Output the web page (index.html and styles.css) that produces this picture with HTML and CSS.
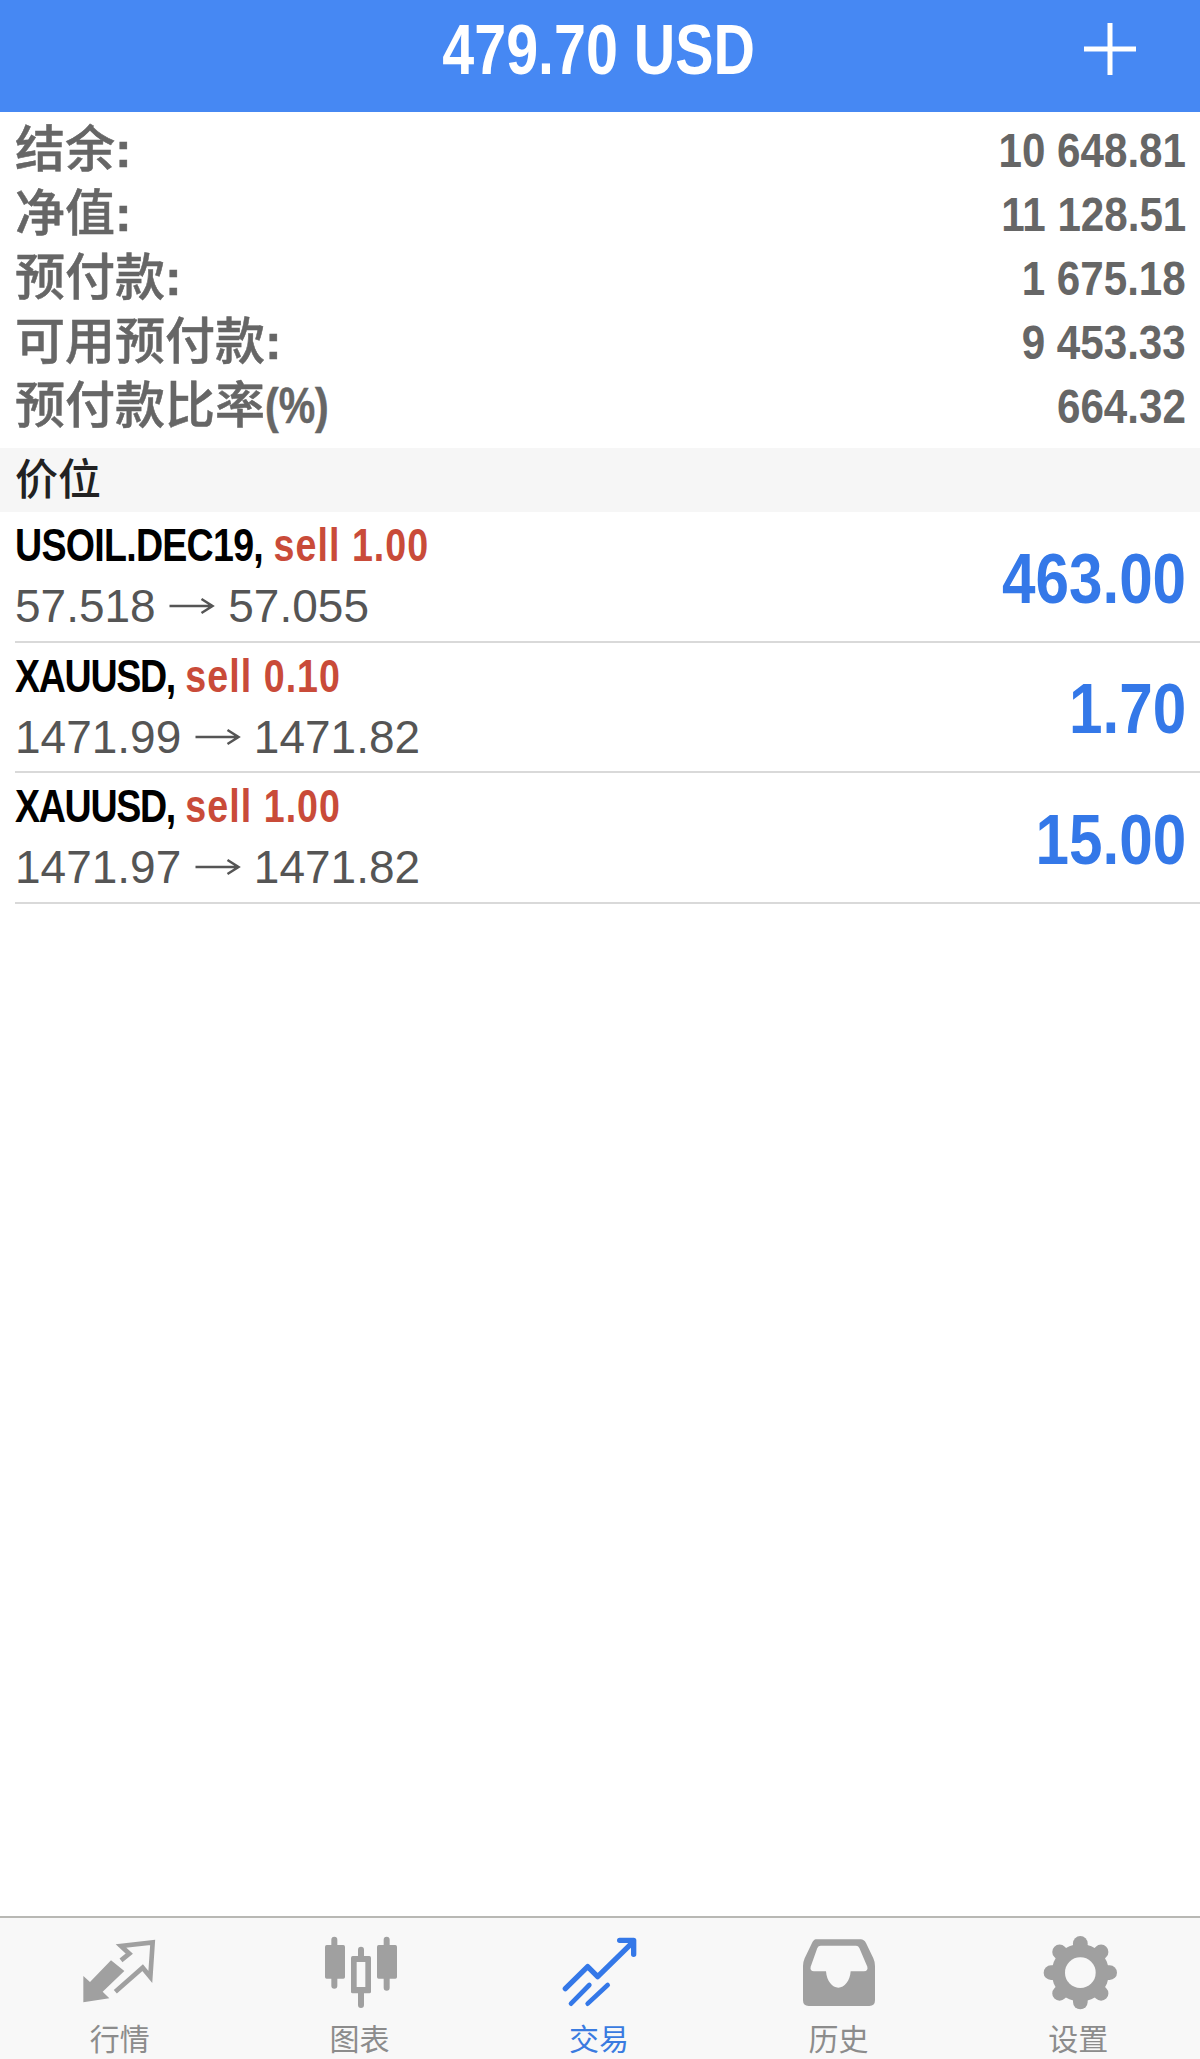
FILE: index.html
```html
<!DOCTYPE html>
<html lang="zh-CN">
<head>
  <meta charset="UTF-8">
  <title>交易</title>
  <link rel="stylesheet" href="styles.css">
</head>
<body>

<header class="topbar">
  <span></span>
  <h1 class="balance"><span class="narrow">479.70 USD</span></h1>
  <svg class="add" viewBox="0 0 52 52"><path d="M0 26H52M26 0V52"/></svg>
</header>

<main class="content">
  <div class="summary">
    <div class="sum-row"><span class="sum-label">结余<b>:</b></span><span class="sum-value narrow-r">10 648.81</span></div>
    <div class="sum-row"><span class="sum-label">净值<b>:</b></span><span class="sum-value narrow-r">11 128.51</span></div>
    <div class="sum-row"><span class="sum-label">预付款<b>:</b></span><span class="sum-value narrow-r">1 675.18</span></div>
    <div class="sum-row"><span class="sum-label">可用预付款<b>:</b></span><span class="sum-value narrow-r">9 453.33</span></div>
    <div class="sum-row"><span class="sum-label">预付款比率<b class="narrow">(%)</b></span><span class="sum-value narrow-r">664.32</span></div>
  </div>

  <div class="section">价位</div>

  <div class="position">
    <div class="pos-info">
      <div class="pos-title narrow"><span class="name long">USOIL.DEC19,</span> <span class="sell">sell 1.00</span></div>
      <div class="pos-price">57.518 <svg class="arrow" viewBox="0 0 46 18"><path d="M1 9H44M33 2L44 9L33 16"/></svg> 57.055</div>
    </div>
    <div class="profit narrow-r">463.00</div>
  </div>
  <div class="position">
    <div class="pos-info">
      <div class="pos-title narrow"><span class="name">XAUUSD,</span> <span class="sell">sell 0.10</span></div>
      <div class="pos-price">1471.99 <svg class="arrow" viewBox="0 0 46 18"><path d="M1 9H44M33 2L44 9L33 16"/></svg> 1471.82</div>
    </div>
    <div class="profit narrow-r">1.70</div>
  </div>
  <div class="position">
    <div class="pos-info">
      <div class="pos-title narrow"><span class="name">XAUUSD,</span> <span class="sell">sell 1.00</span></div>
      <div class="pos-price">1471.97 <svg class="arrow" viewBox="0 0 46 18"><path d="M1 9H44M33 2L44 9L33 16"/></svg> 1471.82</div>
    </div>
    <div class="profit narrow-r">15.00</div>
  </div>
</main>

<nav class="tabbar">
  <div class="tab">
    <svg class="tab-icon" viewBox="122 105 240 222">
      <path class="solid" d="M132 225L152 243L215 178L255 210L190 272L210 292L132 304Z"/>
      <path class="line" d="M245 178L270 158L245 135L340 124L333 228L310 200L228 272"/>
    </svg>
    <span>行情</span>
  </div>
  <div class="tab">
    <svg class="tab-icon" viewBox="834 105 240 222">
      <path class="wick" d="M880 116V254M960 146V312M1037 116V260"/>
      <rect class="solid" x="852" y="132" width="60" height="101" rx="5"/>
      <rect class="solid" x="930" y="165" width="60" height="112" rx="5"/>
      <rect class="hollow" x="947" y="183" width="26" height="75"/>
      <rect class="solid" x="1008" y="132" width="60" height="101" rx="5"/>
    </svg>
    <span>图表</span>
  </div>
  <div class="tab active">
    <svg class="tab-icon" viewBox="114 105 240 222">
      <path class="trend" d="M133 263L200 197L230 227L335 124M296 118H338V160"/>
      <path class="trend thin" d="M150 308L205 252M200 308L260 252"/>
    </svg>
    <span>交易</span>
  </div>
  <div class="tab">
    <svg class="tab-icon" viewBox="835 105 240 222">
      <path class="solid" fill-rule="evenodd" d="M885 115H1020Q1030 115 1036 126L1058 172Q1063 183 1063 195V298Q1063 315 1046 315H864Q847 315 847 298V195Q847 183 852 172L874 126Q880 115 885 115ZM900 134Q893 134 890 141L870 197Q867 210 880 211H916C918 240 935 260 953 260C971 260 988 240 990 211H1030Q1043 210 1040 197L1016 141Q1013 134 1006 134Z"/>
    </svg>
    <span>历史</span>
  </div>
  <div class="tab">
    <svg class="tab-icon" viewBox="169 105 240 222">
      <circle class="solid" cx="296" cy="215" r="86"/>
      <g class="teeth">
        <path d="M296 127V303"/>
        <path d="M296 127V303" transform="rotate(45 296 215)"/>
        <path d="M296 127V303" transform="rotate(90 296 215)"/>
        <path d="M296 127V303" transform="rotate(135 296 215)"/>
      </g>
      <circle class="hollow" cx="296" cy="215" r="46"/>
    </svg>
    <span>设置</span>
  </div>
</nav>

</body>
</html>
```

FILE: styles.css
```css
* { margin:0; padding:0; box-sizing:border-box; }

body { display:flex; flex-direction:column; height:100vh; overflow:hidden; background:#fff; font-family:"Liberation Sans","Noto Sans CJK SC",sans-serif; }

.narrow { display:inline-block; transform:scaleX(.82); transform-origin:left center; white-space:nowrap; }
.narrow-r { display:inline-block; transform:scaleX(.86); transform-origin:right center; white-space:nowrap; }

.topbar { display:grid; grid-template-columns:1fr auto 1fr; align-items:center; height:112px; padding:0 3px 12px 0; background:#4688f3; color:#fff; }
.balance { font-size:70px; font-weight:700; line-height:1; }
.balance .narrow { transform:scaleX(.82); transform-origin:center; }
.add { justify-self:end; width:52px; height:52px; margin:0 61px 3px 0; }
.add path { fill:none; stroke:#fff; stroke-width:5; }

.content { flex:1; }

.summary { padding:6px 14px 10px 15px; color:#666; }
.sum-row { display:flex; justify-content:space-between; align-items:center; height:64px; }
.sum-label { font-size:50px; font-weight:500; line-height:64px; -webkit-text-stroke:.5px #666; }
.sum-label b { font-weight:700; }
.sum-value { font-size:49px; font-weight:700; line-height:64px; }

.section { height:64px; padding-left:15px; background:#f6f6f6; color:#222; font-size:43px; font-weight:500; line-height:64px; }

.position { display:flex; justify-content:space-between; align-items:center; height:130.5px; margin-left:15px; padding:0 14px 0 0; border-bottom:2px solid #d9d9d9; }
.pos-info { display:flex; flex-direction:column; }
.pos-title { height:61px; color:#000; font-size:47px; font-weight:700; line-height:59px; transform:scaleX(.8); }
.name { letter-spacing:-1.67px; }
.name.long { letter-spacing:-.93px; }
.sell { color:#c94b39; letter-spacing:1.3px; }
.pos-price { height:61px; color:#555; font-size:46px; line-height:61px; }
.arrow { width:47px; height:18px; vertical-align:7px; }
.arrow path { fill:none; stroke:#555; stroke-width:2.5; }
.profit { margin-top:5px; color:#3478e8; font-size:70px; font-weight:700; line-height:1; }

.tabbar { display:grid; grid-template-columns:repeat(5,1fr); height:143px; padding:18px 2px 0 0; background:#f8f8f8; border-top:2px solid #b8b8b4; color:#8c8c8c; }
.tab { display:flex; flex-direction:column; align-items:center; gap:13px; font-size:30px; line-height:34px; }
.tab-icon { width:80px; height:74px; }
.tab.active { color:#3a7be0; }

.solid { fill:#a0a0a0; }
.hollow { fill:#f8f8f8; }
.line { fill:none; stroke:#a0a0a0; stroke-width:14; }
.wick { fill:none; stroke:#a0a0a0; stroke-width:18; stroke-linecap:round; }
.trend { fill:none; stroke:#3478e8; stroke-width:16; stroke-linecap:round; stroke-linejoin:round; }
.trend.thin { stroke-width:14; }
.teeth path { fill:none; stroke:#a0a0a0; stroke-width:44; stroke-linecap:round; }
```
